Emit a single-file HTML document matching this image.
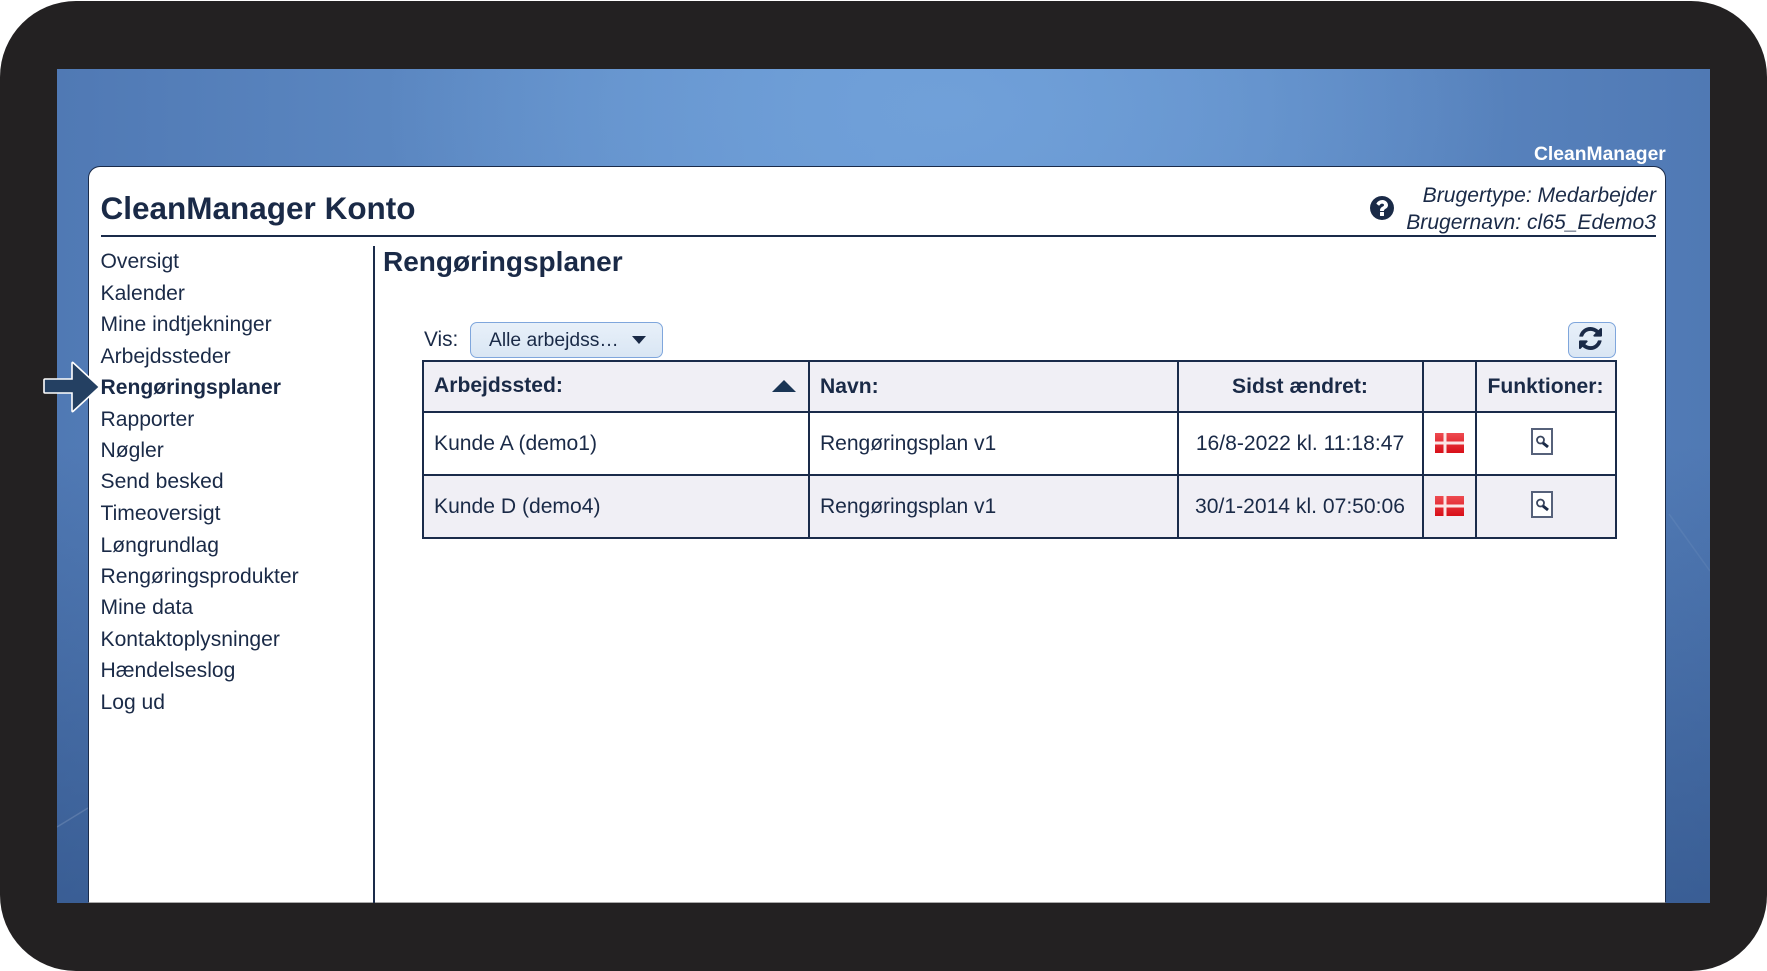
<!DOCTYPE html>
<html lang="da"><head><meta charset="utf-8"><title>CleanManager Konto</title>
<style>
html,body{margin:0;padding:0;background:#fff;width:1767px;height:971px;overflow:hidden}
*{box-sizing:border-box}
body{font-family:"Liberation Sans",sans-serif;color:#1a2a47;position:relative}
#frame{position:absolute;left:0;top:1px;width:1767px;height:970px;background:#232122;border-radius:76px}
#screen{position:absolute;left:57px;top:69px;width:1653px;height:834px;overflow:hidden;
background:radial-gradient(ellipse 560px 300px at 890px 40px,#70a0d9 0%,rgba(110,158,215,0) 100%),linear-gradient(180deg,rgba(0,0,0,0) 45%,rgba(30,60,110,.45) 100%),linear-gradient(90deg,#5079b4 0%,#6a9ad3 50%,#5079b4 100%)}
.t{position:absolute;white-space:nowrap;line-height:30px;height:30px}
.ln{position:absolute;background:#1a2b4a}
#card{position:absolute;left:87.5px;top:165.5px;width:1578.5px;height:737.5px;background:#fff;border:1.5px solid #1a2b4a;border-bottom:1px solid #aaa;border-radius:12px 12px 0 0}
.cell{position:absolute}
.nav{font-size:21.1px}
.td{font-size:21.1px}
.th{font-size:21.1px;font-weight:bold}
</style></head><body>
<div id="frame"></div>
<div id="screen"><svg style="position:absolute;left:0;top:0" width="1653" height="834"><path d="M0 758L31 739" stroke="#fff" stroke-opacity=".14" stroke-width="1.500"/><path d="M1612 445L1653 502" stroke="#fff" stroke-opacity=".06" stroke-width="1.500"/></svg></div>
<div class="t" style="left:1534px;top:140px;font-size:19.3px;font-weight:bold;color:#fff">CleanManager</div>
<div id="card"></div>
<div class="t" style="left:100.5px;top:192px;font-size:31.5px;font-weight:bold;height:32px;line-height:32px">CleanManager Konto</div>
<div class="ln" style="left:101px;top:235px;width:1555px;height:2px"></div>
<div class="ln" style="left:373px;top:246px;width:1.500px;height:656.500px"></div>
<svg style="position:absolute;left:1370px;top:196px" width="24" height="24" viewBox="128 128 1536 1536"><path fill="#1a2a47" d="M1024 1376v-192q0-14-9-23t-23-9h-192q-14 0-23 9t-9 23v192q0 14 9 23t23 9h192q14 0 23-9t9-23zm256-672q0-88-55.5-163t-138.500-116-170-41q-243 0-371 213-15 24 8 42l132 100q7 6 19 6 16 0 25-12 53-68 86-92 34-24 86-24 48 0 85.500 26t37.500 59q0 38-20 61t-68 45q-63 28-115.500 86.500t-52.500 125.500v36q0 14 9 23t23 9h192q14 0 23-9t9-23q0-19 21.500-49.500t54.500-49.500q32-18 49-28.500t46-35 44.500-48 28-60.500 12.500-81zm384 192q0 209-103 385.500t-279.500 279.500-385.500 103-385.500-103-279.500-279.500-103-385.500 103-385.500 279.500-279.500 385.500-103 385.500 103 279.500 279.500 103 385.500z"/></svg>
<div class="t" style="right:111px;top:181px;font-size:21.1px;font-style:italic">Brugertype: Medarbejder</div>
<div class="t" style="right:111px;top:208px;font-size:21.1px;font-style:italic">Brugernavn: cl65_Edemo3</div>

<div class="t nav" style="left:100.500px;top:246.500px">Oversigt</div>
<div class="t nav" style="left:100.500px;top:278.500px">Kalender</div>
<div class="t nav" style="left:100.500px;top:309.500px">Mine indtjekninger</div>
<div class="t nav" style="left:100.500px;top:341.500px">Arbejdssteder</div>
<div class="t nav" style="left:100.500px;top:372.500px;font-weight:bold">Rengøringsplaner</div>
<div class="t nav" style="left:100.500px;top:404.500px">Rapporter</div>
<div class="t nav" style="left:100.500px;top:435.500px">Nøgler</div>
<div class="t nav" style="left:100.500px;top:467px">Send besked</div>
<div class="t nav" style="left:100.500px;top:498.500px">Timeoversigt</div>
<div class="t nav" style="left:100.500px;top:530.500px">Løngrundlag</div>
<div class="t nav" style="left:100.500px;top:561.500px">Rengøringsprodukter</div>
<div class="t nav" style="left:100.500px;top:593px">Mine data</div>
<div class="t nav" style="left:100.500px;top:624.500px">Kontaktoplysninger</div>
<div class="t nav" style="left:100.500px;top:656px">Hændelseslog</div>
<div class="t nav" style="left:100.500px;top:687.500px">Log ud</div>

<svg style="position:absolute;left:40px;top:358px" width="62" height="58" viewBox="40 358 62 58"><path d="M45 379H72V363.500Q72 361.500 73.500 363L99.500 387 73.500 411Q72 412.500 72 410.500V393H45Q44 393 44 392V380Q44 379 45 379Z" fill="#244062" stroke="#fff" stroke-width="1.600"/></svg>

<div class="t" style="left:383px;top:246px;font-size:28px;font-weight:bold;height:32px;line-height:32px">Rengøringsplaner</div>

<div class="t td" style="left:424px;top:325px;font-size:20.800px">Vis:</div>
<div style="position:absolute;left:470px;top:322px;width:193px;height:36px;border:1.500px solid #7fa6dc;border-radius:7px;background:linear-gradient(#e8f0f9,#d9e6f4)"></div>
<div class="t td" style="left:489px;top:326px;font-size:19.300px">Alle arbejdss…</div>
<svg style="position:absolute;left:632px;top:336px" width="14" height="8"><path d="M0 0H14L7 8Z" fill="#1a2a47"/></svg>
<div style="position:absolute;left:1567.500px;top:322px;width:48.500px;height:36px;border:1.500px solid #7fa6dc;border-radius:7px;background:linear-gradient(#e8f0f9,#d9e6f4)"></div>
<svg style="position:absolute;left:1579px;top:327px" width="23" height="23" viewBox="128 128 1536 1536"><path fill="#1a2a47" d="M1639 1056q0 5-1 7-64 268-268 434.500t-478 166.500q-146 0-282.500-55t-243.500-157l-129 129q-19 19-45 19t-45-19-19-45v-448q0-26 19-45t45-19h448q26 0 45 19t19 45-19 45l-137 137q71 66 161 102t187 36q134 0 250-65t186-179q11-17 53-117 8-23 30-23h192q13 0 22.500 9.500t9.500 22.500zm25-800v448q0 26-19 45t-45 19h-448q-26 0-45-19t-19-45 19-45l138-138q-148-137-349-137-134 0-250 65t-186 179q-11 17-53 117-8 23-30 23h-199q-13 0-22.500-9.500t-9.500-22.500v-7q65-268 270-434.500t480-166.500q146 0 284 55.500t245 156.500l130-129q19-19 45-19t45 19 19 45z"/></svg>

<!-- table -->
<div class="cell" style="left:422px;top:360px;width:1195px;height:52px;background:#f0eff5"></div>
<div class="cell" style="left:422px;top:474px;width:1195px;height:64px;background:#f0eff5"></div>
<div class="ln" style="left:422px;top:360px;width:1195px;height:2px"></div>
<div class="ln" style="left:422px;top:411px;width:1195px;height:2px"></div>
<div class="ln" style="left:422px;top:474px;width:1195px;height:2px"></div>
<div class="ln" style="left:422px;top:536.500px;width:1195px;height:2px"></div>
<div class="ln" style="left:422px;top:360px;width:2px;height:178px"></div>
<div class="ln" style="left:808px;top:360px;width:2px;height:178px"></div>
<div class="ln" style="left:1177px;top:360px;width:2px;height:178px"></div>
<div class="ln" style="left:1422px;top:360px;width:2px;height:178px"></div>
<div class="ln" style="left:1475px;top:360px;width:2px;height:178px"></div>
<div class="ln" style="left:1615px;top:360px;width:2px;height:178px"></div>

<div class="t th" style="left:434px;top:370.500px">Arbejdssted:</div>
<svg style="position:absolute;left:772px;top:380px" width="24" height="12"><path d="M12 0L24 12H0Z" fill="#1a3555"/></svg>
<div class="t th" style="left:820px;top:372px">Navn:</div>
<div class="t th" style="left:1178px;width:244px;top:372px;text-align:center">Sidst ændret:</div>
<div class="t th" style="left:1477px;width:137px;top:372px;text-align:center">Funktioner:</div>

<div class="t td" style="left:434px;top:429px">Kunde A (demo1)</div>
<div class="t td" style="left:820px;top:429px;letter-spacing:-.05px">Rengøringsplan v1</div>
<div class="t td" style="left:1178px;width:244px;top:429px;text-align:center">16/8-2022 kl. 11:18:47</div>
<div class="t td" style="left:434px;top:492px">Kunde D (demo4)</div>
<div class="t td" style="left:820px;top:492px;letter-spacing:-.05px">Rengøringsplan v1</div>
<div class="t td" style="left:1178px;width:244px;top:492px;text-align:center">30/1-2014 kl. 07:50:06</div>

<svg style="position:absolute;left:1435px;top:433px" width="29" height="20"><defs><linearGradient id="f" x1="0" y1="0" x2="0" y2="1"><stop offset="0" stop-color="#ee4a50"/><stop offset="1" stop-color="#d80f18"/></linearGradient></defs><rect width="29" height="20" fill="url(#f)"/><rect x="8.500" width="3" height="20" fill="#fbe6e6"/><rect y="8.500" width="29" height="3" fill="#fbe6e6"/></svg>
<svg style="position:absolute;left:1435px;top:496px" width="29" height="20"><rect width="29" height="20" fill="url(#f)"/><rect x="8.500" width="3" height="20" fill="#fbe6e6"/><rect y="8.500" width="29" height="3" fill="#fbe6e6"/></svg>
<svg style="position:absolute;left:1530px;top:428px" width="24" height="27"><rect x="2" y="1" width="20" height="25" fill="#fff" stroke="#56617a" stroke-width="2"/><circle cx="10.500" cy="12" r="3.500" fill="none" stroke="#3a465f" stroke-width="1.800"/><path d="M13 15L18 19" stroke="#1a2a47" stroke-width="3"/></svg>
<svg style="position:absolute;left:1530px;top:491px" width="24" height="27"><rect x="2" y="1" width="20" height="25" fill="#fff" stroke="#56617a" stroke-width="2"/><circle cx="10.500" cy="12" r="3.500" fill="none" stroke="#3a465f" stroke-width="1.800"/><path d="M13 15L18 19" stroke="#1a2a47" stroke-width="3"/></svg>
</body></html>
